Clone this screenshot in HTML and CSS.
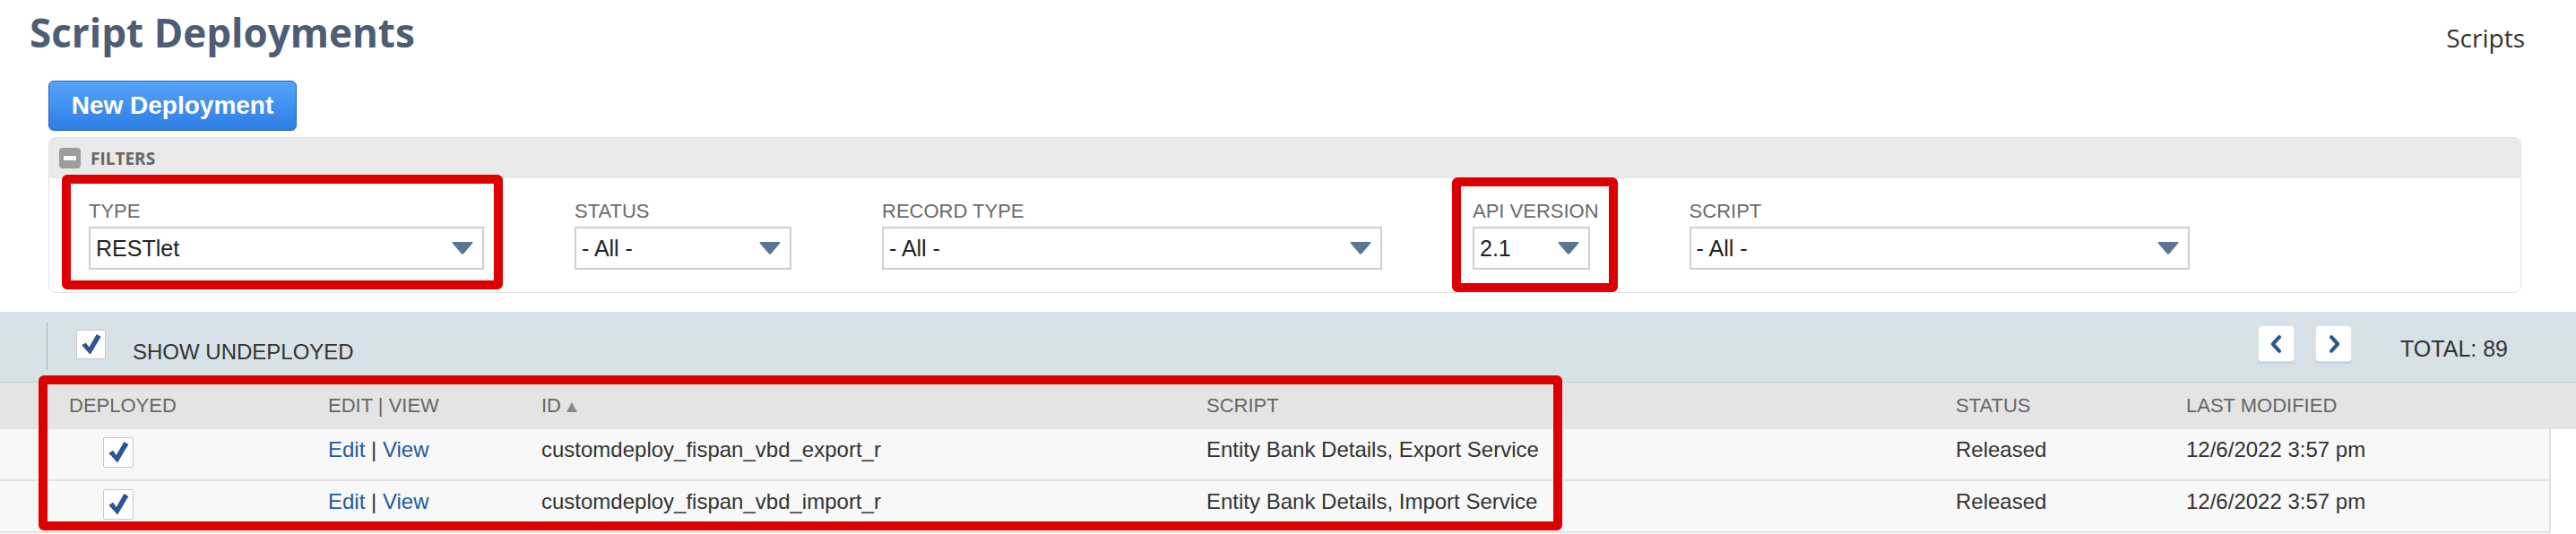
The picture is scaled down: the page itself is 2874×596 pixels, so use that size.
FILE: index.html
```html
<!DOCTYPE html>
<html lang="en">

<head>
  <meta charset="UTF-8" />
  <title>Script Deployments</title>
  <link rel="stylesheet" href="styles.css">
</head>

<body>
  <div class="page">

    <!-- Cabecera -->
    <header class="page-head">
      <h1 class="page-title">Script Deployments</h1>
      <a class="crumb">Scripts</a>
    </header>

    <div class="actions">
      <button class="btn-primary">New Deployment</button>
    </div>

    <!-- Filtros -->
    <section class="filters">
      <div class="filters-head">
        <span class="collapse-icon"></span>
        <span>FILTERS</span>
      </div>
      <div class="filters-body">
        <div class="field">
          <label>TYPE</label>
          <div class="select w-type"><span>RESTlet</span><svg class="arrow" viewBox="0 0 24 14"><path d="M1.5 0H22.5Q24 0 23.2 1.4L13.6 12.8Q12 14.6 10.4 12.8L0.8 1.4Q0 0 1.5 0Z"/></svg></div>
        </div>
        <div class="field">
          <label>STATUS</label>
          <div class="select w-status"><span>- All -</span><svg class="arrow" viewBox="0 0 24 14"><path d="M1.5 0H22.5Q24 0 23.2 1.4L13.6 12.8Q12 14.6 10.4 12.8L0.8 1.4Q0 0 1.5 0Z"/></svg></div>
        </div>
        <div class="field">
          <label>RECORD TYPE</label>
          <div class="select w-wide"><span>- All -</span><svg class="arrow" viewBox="0 0 24 14"><path d="M1.5 0H22.5Q24 0 23.2 1.4L13.6 12.8Q12 14.6 10.4 12.8L0.8 1.4Q0 0 1.5 0Z"/></svg></div>
        </div>
        <div class="field">
          <label>API VERSION</label>
          <div class="select w-api"><span>2.1</span><svg class="arrow" viewBox="0 0 24 14"><path d="M1.5 0H22.5Q24 0 23.2 1.4L13.6 12.8Q12 14.6 10.4 12.8L0.8 1.4Q0 0 1.5 0Z"/></svg></div>
        </div>
        <div class="field">
          <label>SCRIPT</label>
          <div class="select w-wide"><span>- All -</span><svg class="arrow" viewBox="0 0 24 14"><path d="M1.5 0H22.5Q24 0 23.2 1.4L13.6 12.8Q12 14.6 10.4 12.8L0.8 1.4Q0 0 1.5 0Z"/></svg></div>
        </div>
      </div>
    </section>

    <!-- Barra de lista -->
    <div class="list-bar">
      <span class="bar-sep"></span>
      <span class="check bar-check"><svg viewBox="0 0 20 20"><path d="M1.8 10.4L5.4 8.2L8.2 12.2L14.8 0.8L18.6 3L9.2 18.6Z"/></svg></span>
      <span class="bar-label">SHOW UNDEPLOYED</span>
      <button class="pager pager-prev"><svg viewBox="0 0 20 20"><path d="M12.5 3.5L6.5 10L12.5 16.5"/></svg></button>
      <button class="pager pager-next"><svg viewBox="0 0 20 20"><path d="M7.5 3.5L13.5 10L7.5 16.5"/></svg></button>
      <span class="total">TOTAL: 89</span>
    </div>

    <!-- Tabla -->
    <div class="list">
      <div class="list-row list-head">
        <div class="col-first">DEPLOYED</div>
        <div>EDIT | VIEW</div>
        <div>ID<svg class="sort" viewBox="0 0 12 11"><path d="M6 0L12 11H0Z"/></svg></div>
        <div>SCRIPT</div>
        <div>STATUS</div>
        <div>LAST MODIFIED</div>
      </div>
      <div class="list-rows">
        <div class="list-row">
          <div class="col-first"><span class="check row-check"><svg viewBox="0 0 20 20"><path d="M1.8 10.4L5.4 8.2L8.2 12.2L14.8 0.8L18.6 3L9.2 18.6Z"/></svg></span></div>
          <div><a class="link">Edit</a> | <a class="link">View</a></div>
          <div>customdeploy_fispan_vbd_export_r</div>
          <div>Entity Bank Details, Export Service</div>
          <div>Released</div>
          <div>12/6/2022 3:57 pm</div>
        </div>
        <div class="list-row">
          <div class="col-first"><span class="check row-check"><svg viewBox="0 0 20 20"><path d="M1.8 10.4L5.4 8.2L8.2 12.2L14.8 0.8L18.6 3L9.2 18.6Z"/></svg></span></div>
          <div><a class="link">Edit</a> | <a class="link">View</a></div>
          <div>customdeploy_fispan_vbd_import_r</div>
          <div>Entity Bank Details, Import Service</div>
          <div>Released</div>
          <div>12/6/2022 3:57 pm</div>
        </div>
      </div>
    </div>

    <!-- Marcas rojas -->
    <div class="mark mark-type"></div>
    <div class="mark mark-api"></div>
    <div class="mark mark-table"></div>

  </div>
</body>

</html>
```

FILE: styles.css
```css
body {
  margin: 0;
  background: #fff;
  font-family: "Liberation Sans", Arial, sans-serif;
  color: #333;
}

.page {
  position: relative;
  width: 2874px;
  height: 596px;
  overflow: hidden;
}

/* cabecera */
.page-head {
  display: flex;
  justify-content: space-between;
  align-items: baseline;
  height: 90px;
  box-sizing: border-box;
  padding: 8px 57px 0 33px;
}

.page-title {
  margin: 0;
  font: 700 44px/56px "Open Sans", sans-serif;
  color: #4d5d74;
}

.crumb {
  font: 400 28px/56px "Open Sans", sans-serif;
  color: #333;
}

.actions {
  padding-left: 54px;
}

.btn-primary {
  display: block;
  width: 277px;
  height: 56px;
  padding: 0;
  font: 700 28px "Liberation Sans", Arial, sans-serif;
  color: #fff;
  border: 1px solid #2068c9;
  border-radius: 6px;
  background: linear-gradient(#56a4f8, #2d7de5);
}

/* filtros */
.filters {
  margin: 7px 0 0 54px;
  width: 2759px;
  height: 174px;
  box-sizing: border-box;
  border: 1px solid #e3e3e3;
  border-radius: 8px;
  overflow: hidden;
}

.filters-head {
  display: flex;
  align-items: center;
  gap: 11px;
  height: 45px;
  padding-left: 11px;
  background: #e9e9e9;
  font: 700 19px "Open Sans", sans-serif;
  color: #666;
}

.collapse-icon {
  display: flex;
  align-items: center;
  justify-content: center;
  width: 24px;
  height: 23px;
  border-radius: 4px;
  background: #9c9c9c;
}

.collapse-icon::before {
  content: "";
  width: 14px;
  height: 5px;
  background: #fff;
}

.filters-body {
  display: flex;
  gap: 101px;
  padding: 24px 0 0 44px;
}

.field label {
  display: block;
  margin-bottom: 4px;
  font-size: 22px;
  line-height: 26px;
  color: #6b6b6b;
  white-space: nowrap;
}

.select {
  display: flex;
  align-items: center;
  justify-content: space-between;
  height: 48px;
  box-sizing: border-box;
  padding: 0 10px 0 6px;
  border: 2px solid #cfcfcf;
  font-size: 25px;
  color: #222;
}

.select .arrow {
  width: 24px;
  height: 14px;
  fill: #5b7597;
}

.w-type { width: 441px; }
.w-status { width: 242px; }
.w-wide { width: 558px; }
.w-api { width: 131px; }

/* barra */
.list-bar {
  display: flex;
  align-items: flex-start;
  height: 79px;
  margin-top: 21px;
  background: #d6e2e8;
  border-bottom: 1px solid #c6d0d5;
  box-sizing: border-box;
}

.bar-sep {
  width: 1px;
  height: 53px;
  margin: 12px 0 0 52px;
  background: #a9b3b8;
}

.check {
  display: flex;
  align-items: center;
  justify-content: center;
  box-sizing: border-box;
  background: #fff;
  border: 1px solid #c9c9c9;
  border-radius: 2px;
}

.check svg {
  width: 82%;
  height: 82%;
  fill: #2c5597;
}

.bar-check {
  width: 33px;
  height: 33px;
  margin: 20px 0 0 32px;
}

.bar-label {
  margin: 31px 0 0 30px;
  font-size: 24px;
  line-height: 28px;
  color: #333;
}

.pager {
  display: flex;
  align-items: center;
  justify-content: center;
  width: 41px;
  height: 41px;
  margin-top: 15px;
  padding: 0;
  background: #fff;
  border: 1px solid #dde3e6;
  border-radius: 4px;
  box-shadow: 0 2px 1px rgba(0, 0, 0, 0.08);
}

.pager svg {
  width: 24px;
  height: 24px;
  fill: none;
  stroke: #2b5797;
  stroke-width: 3.4;
  stroke-linecap: round;
  stroke-linejoin: round;
}

.pager-prev {
  margin-left: auto;
}

.pager-next {
  margin-left: 23px;
}

.total {
  margin: 26px 76px 0 54px;
  font-size: 25px;
  line-height: 30px;
  color: #333;
}

/* tabla */
.list-row {
  display: grid;
  grid-template-columns: 366px 238px 742px 836px 257px 1fr;
  white-space: nowrap;
}

.list-head {
  height: 52px;
  background: #e4e4e4;
  font-size: 22px;
  line-height: 52px;
  color: #666;
}

.list-head .col-first {
  padding-left: 77px;
}

.sort {
  width: 12px;
  height: 11px;
  margin-left: 6px;
  fill: #8a8a8a;
}

.list-rows {
  width: 2844px;
  border-right: 2px solid #e2e2e2;
}

.list-rows .list-row {
  height: 58px;
  box-sizing: border-box;
  padding-top: 9px;
  border-bottom: 2px solid #e2e2e2;
  background: #f8f8f8;
  font-size: 24px;
  line-height: 28px;
  color: #333;
}

.list-rows .col-first {
  padding-left: 115px;
}

.row-check {
  width: 34px;
  height: 34px;
}

.link {
  color: #24589d;
}

/* marcas */
.mark {
  position: absolute;
  box-sizing: border-box;
  border: 10px solid #dd0000;
  border-radius: 6px;
}

.mark-type {
  left: 69px;
  top: 195px;
  width: 492px;
  height: 128px;
}

.mark-api {
  left: 1620px;
  top: 198px;
  width: 185px;
  height: 128px;
}

.mark-table {
  left: 43px;
  top: 419px;
  width: 1700px;
  height: 173px;
}
```
